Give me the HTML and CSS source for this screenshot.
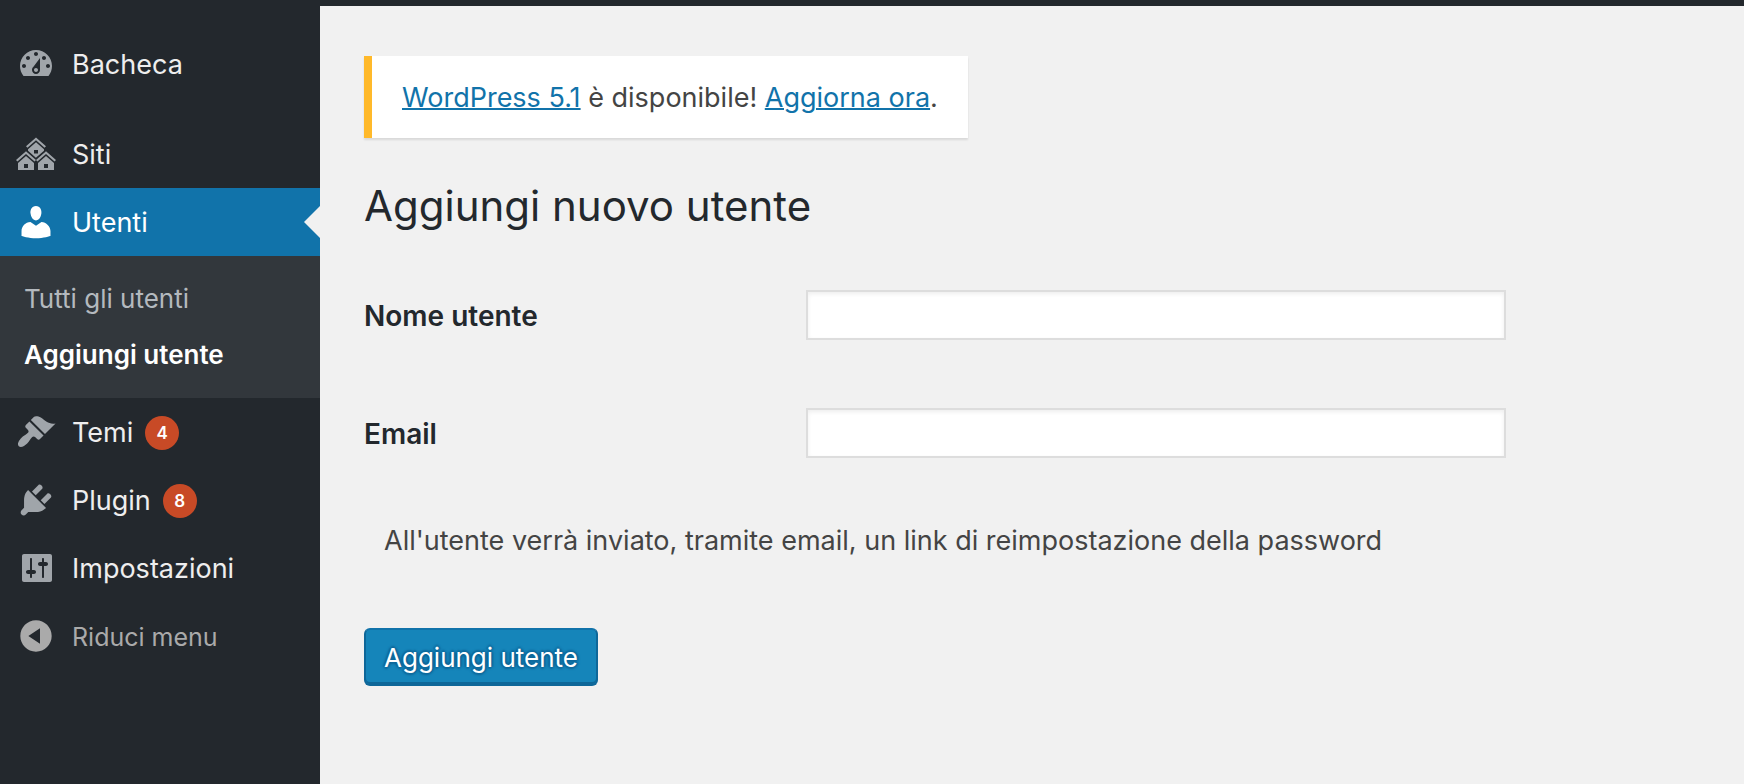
FILE: index.html
```html
<!DOCTYPE html>
<html lang="it">
<head>
<meta charset="utf-8">
<meta name="viewport" content="width=device-width, initial-scale=1">
<title>Aggiungi nuovo utente</title>
<link rel="stylesheet" href="styles.css">
</head>
<body>
<div class="admin-bar"></div>
<div class="shell">
  <nav class="sidebar" aria-label="Menu principale">
    <ul class="menu">
      <li class="menu-group">
        <a class="menu-link" href="#">
          <svg class="icon" viewBox="0 0 20 20" aria-hidden="true"><path d="M3.76 16h12.48c1.1-1.37 1.76-3.11 1.76-5 0-4.42-3.58-8-8-8s-8 3.58-8 8c0 1.89.66 3.63 1.76 5zM10 4c.55 0 1 .45 1 1s-.45 1-1 1-1-.45-1-1 .45-1 1-1zM6 6c.55 0 1 .45 1 1s-.45 1-1 1-1-.45-1-1 .45-1 1-1zm8 0c.55 0 1 .45 1 1s-.45 1-1 1-1-.45-1-1 .45-1 1-1zm-5.37 5.55L12 7v6c0 1.1-.9 2-2 2s-2-.9-2-2c0-.57.24-1.08.63-1.45zM4 10c.55 0 1 .45 1 1s-.45 1-1 1-1-.45-1-1 .45-1 1-1zm12 0c.55 0 1 .45 1 1s-.45 1-1 1-1-.45-1-1 .45-1 1-1zm-5 3c0-.55-.45-1-1-1s-1 .45-1 1 .45 1 1 1 1-.45 1-1z"/></svg>
          <span class="menu-text">Bacheca</span>
        </a>
      </li>
      <li>
        <a class="menu-link" href="#">
          <svg class="icon" viewBox="0 0 20 20" aria-hidden="true"><path d="M14.27 6.87L10 3.14 5.73 6.87 5 6.14l5-4.38 5 4.38zM14 8.42l-4.05 3.43L6 8.38v-.74l4-3.5 4 3.5v.78zM11 9.7V8H9v1.7h2zm-1.73 4.03L5 10 .73 13.73 0 13l5-4.38L10 13zm10 0L15 10l-4.27 3.73L10 13l5-4.38L20 13zM5 11l4 3.5V18H1v-3.5zm10 0l4 3.5V18h-8v-3.5zm-9 6v-2H4v2h2zm10 0v-2h-2v2h2z"/></svg>
          <span class="menu-text">Siti</span>
        </a>
      </li>
      <li>
        <a class="menu-link menu-link-current" href="#">
          <svg class="icon" viewBox="0 0 20 20" aria-hidden="true"><path d="M10 9.25c-2.27 0-2.73-3.44-2.73-3.44C7 4.02 7.82 2 9.97 2c2.16 0 2.98 2.02 2.71 3.81 0 0-.41 3.44-2.68 3.44zm0 2.57L12.72 10c2.39 0 4.52 2.33 4.52 4.53v2.49s-3.65 1.13-7.24 1.13c-3.65 0-7.24-1.13-7.24-1.13v-2.49c0-2.25 1.94-4.48 4.47-4.48z"/></svg>
          <span class="menu-text">Utenti</span>
        </a>
        <ul class="submenu">
          <li><a class="submenu-link" href="#">Tutti gli utenti</a></li>
          <li><a class="submenu-link submenu-link-current" href="#" aria-current="page">Aggiungi utente</a></li>
        </ul>
      </li>
      <li>
        <a class="menu-link" href="#">
          <svg class="icon" viewBox="0 0 20 20" aria-hidden="true"><path d="M14.48 11.06L7.41 3.99l1.5-1.5c.5-.56 2.3-.47 3.51.32 1.21.8 1.43 1.28 2.91 2.1 1.18.64 2.45 1.26 4.45.85zm-.71.71L6.7 4.7 4.93 6.47c-.39.39-.39 1.02 0 1.41l1.06 1.06c.39.39.39 1.03 0 1.42-.6.6-1.43 1.11-2.21 1.69-.35.26-.7.53-1.01.84C1.43 14.23.4 16.08 1.4 17.07c.99 1 2.84-.03 4.18-1.36.31-.31.58-.66.85-1.02.57-.78 1.08-1.61 1.69-2.21.39-.39 1.02-.39 1.41 0l1.06 1.06c.39.39 1.02.39 1.41 0z"/></svg>
          <span class="menu-text">Temi</span>
          <span class="badge">4</span>
        </a>
      </li>
      <li>
        <a class="menu-link" href="#">
          <svg class="icon" viewBox="0 0 20 20" aria-hidden="true"><path d="M13.11 4.36L9.87 7.6 8 5.73l3.24-3.24c.35-.34 1.05-.2 1.56.32.52.51.66 1.21.31 1.55zm-8 1.77l.91-1.12 9.01 9.01-1.19.84c-.71.71-2.63 1.16-3.82 1.16H6.14L4.9 17.26c-.59.59-1.54.59-2.12 0-.59-.58-.59-1.53 0-2.12l1.24-1.24v-3.88c0-1.13.4-3.19 1.09-3.89zm7.26 3.97l3.24-3.24c.34-.35 1.04-.21 1.55.31.52.51.66 1.21.31 1.55l-3.24 3.25z"/></svg>
          <span class="menu-text">Plugin</span>
          <span class="badge">8</span>
        </a>
      </li>
      <li>
        <a class="menu-link" href="#">
          <svg class="icon" viewBox="0 0 20 20" aria-hidden="true"><path d="M18 16V4c0-.55-.45-1-1-1H4c-.55 0-1 .45-1 1v12c0 .55.45 1 1 1h13c.55 0 1-.45 1-1zM8 11h1c.55 0 1 .45 1 1s-.45 1-1 1H8v1.5c0 .28-.22.5-.5.5s-.5-.22-.5-.5V13H6c-.55 0-1-.45-1-1s.45-1 1-1h1V5.5c0-.28.22-.5.5-.5s.5.22.5.5V11zm5-2h-1c-.55 0-1-.45-1-1s.45-1 1-1h1V5.5c0-.28.22-.5.5-.5s.5.22.5.5V7h1c.55 0 1 .45 1 1s-.45 1-1 1h-1v5.5c0 .28-.22.5-.5.5s-.5-.22-.5-.5V9z"/></svg>
          <span class="menu-text">Impostazioni</span>
        </a>
      </li>
      <li>
        <button class="menu-link menu-collapse" type="button">
          <svg class="icon" viewBox="0 0 20 20" aria-hidden="true"><path d="M10 2.16c4.33 0 7.84 3.51 7.84 7.84s-3.51 7.84-7.84 7.84S2.16 14.33 2.16 10 5.71 2.16 10 2.16zm2 11.72V6.12L6.18 9.97z"/></svg>
          <span class="menu-text">Riduci menu</span>
        </button>
      </li>
    </ul>
  </nav>
  <main class="content">
    <p class="notice"><a class="notice-link" href="#">WordPress 5.1</a> è disponibile! <a class="notice-link" href="#">Aggiorna ora</a>.</p>
    <h1 class="title">Aggiungi nuovo utente</h1>
    <form class="form">
      <div class="field">
        <label class="field-label" for="username">Nome utente</label>
        <input class="field-input" id="username" type="text">
      </div>
      <div class="field">
        <label class="field-label" for="email">Email</label>
        <input class="field-input" id="email" type="email">
      </div>
      <p class="hint">All'utente verrà inviato, tramite email, un link di reimpostazione della password</p>
      <button class="submit" type="button">Aggiungi utente</button>
    </form>
  </main>
</div>
</body>
</html>
```
FILE: styles.css
```css
* {
  box-sizing: border-box;
}

body {
  margin: 0;
  min-height: 100vh;
  display: flex;
  flex-direction: column;
  background: #f1f1f1;
  color: #444;
  font-family: Inter, "Liberation Sans", sans-serif;
  font-size: 27px;
  line-height: 38px;
}

.admin-bar {
  height: 6px;
  background: #23282d;
}

.shell {
  flex: 1;
  display: flex;
}

.sidebar {
  flex: 0 0 320px;
  padding-top: 24px;
  background: #23282d;
}

.menu,
.submenu {
  margin: 0;
  padding: 0;
  list-style: none;
}

.menu-group {
  margin-bottom: 22px;
}

.menu-link {
  position: relative;
  display: flex;
  align-items: center;
  width: 100%;
  height: 68px;
  padding: 0 16px;
  color: #eee;
  font-size: 27px;
  text-decoration: none;
}

.menu-text {
  padding-top: 2px;
}

.icon {
  flex: none;
  width: 40px;
  height: 40px;
  margin-right: 16px;
  fill: #a0a5aa;
}

.menu-link-current {
  background: #1173aa;
  color: #fff;
}

.menu-link-current .icon {
  fill: #fff;
}

.menu-link-current::after {
  content: "";
  position: absolute;
  top: 18px;
  right: 0;
  border: 16px solid transparent;
  border-left-width: 0;
  border-right-color: #f1f1f1;
}

.submenu {
  padding: 14px 0 16px;
  background: #32373c;
}

.submenu-link {
  display: block;
  padding: 10px 24px 8px;
  color: #b4b9be;
  font-size: 26px;
  text-decoration: none;
}

.submenu-link-current {
  color: #fff;
  font-weight: 600;
}

.badge {
  width: 34px;
  height: 34px;
  margin: 2px 0 0 12px;
  border-radius: 50%;
  background: #c84a26;
  color: #fff;
  font-size: 17px;
  font-weight: 600;
  line-height: 34px;
  text-align: center;
}

.menu-collapse {
  border: 0;
  background: none;
  color: #aaa;
  font-family: inherit;
  font-size: 25px;
  text-align: left;
}

.menu-collapse .icon {
  fill: #aaa;
}

.content {
  flex: 1;
  padding: 50px 40px 40px 44px;
}

.notice {
  width: fit-content;
  margin: 0;
  padding: 23px 30px 21px;
  border-left: 8px solid #ffb92a;
  background: #fff;
  box-shadow: 0 2px 2px rgba(0, 0, 0, 0.1);
}

.notice-link {
  color: #1173aa;
  text-decoration-thickness: 2px;
}

.title {
  margin: 38px 0 0;
  color: #23282d;
  font-size: 42px;
  font-weight: 400;
  line-height: 60px;
}

.form {
  margin-top: 54px;
}

.field {
  display: grid;
  grid-template-columns: 442px minmax(0, 700px);
  align-items: center;
  margin-bottom: 68px;
}

.field-label {
  padding-top: 2px;
  color: #23282d;
  font-size: 28px;
  font-weight: 600;
}

.field-input {
  width: 100%;
  height: 50px;
  padding: 6px 10px;
  border: 2px solid #ddd;
  border-radius: 0;
  background: #fff;
  box-shadow: inset 0 2px 4px rgba(0, 0, 0, 0.07);
  color: #32373c;
  font: inherit;
}

.hint {
  margin: -4px 20px 0;
}

.submit {
  height: 58px;
  margin-top: 68px;
  padding: 0 18px;
  border: 2px solid #1173aa;
  border-color: #1173aa #0e6799 #0e6799;
  border-radius: 6px;
  background: #1585ba;
  box-shadow: inset 0 -2px 0 #0e6799;
  color: #fff;
  font-family: inherit;
  font-size: 26px;
  text-shadow: 0 -2px 2px #0e6799, 2px 0 2px #0e6799, 0 2px 2px #0e6799, -2px 0 2px #0e6799;
}
```
